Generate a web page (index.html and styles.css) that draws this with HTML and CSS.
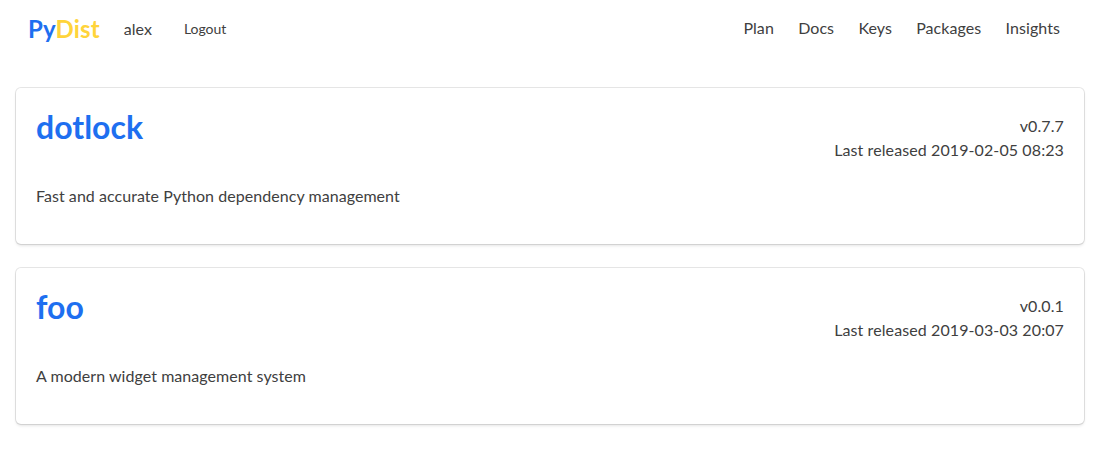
FILE: index.html
```html
<!DOCTYPE html>
<html lang="en">
<head>
  <meta charset="UTF-8">
  <title>PyDist</title>
  <link rel="stylesheet" href="styles.css">
</head>
<body>
  <nav class="navbar">
    <div class="navbar-left">
      <a class="brand" href="#"><span class="brand-py">Py</span><span class="brand-dist">Dist</span></a>
      <span class="nav-user">alex</span>
      <a class="nav-logout" href="#">Logout</a>
    </div>
    <div class="navbar-right">
      <a href="#">Plan</a>
      <a href="#">Docs</a>
      <a href="#">Keys</a>
      <a href="#">Packages</a>
      <a href="#">Insights</a>
    </div>
  </nav>

  <main class="package-list">
    <div class="card">
      <div class="card-top">
        <a class="package-name" href="#">dotlock</a>
        <div class="package-meta">
          <div>v0.7.7</div>
          <div>Last released 2019-02-05 08:23</div>
        </div>
      </div>
      <p class="package-desc">Fast and accurate Python dependency management</p>
    </div>
    <div class="card">
      <div class="card-top">
        <a class="package-name" href="#">foo</a>
        <div class="package-meta">
          <div>v0.0.1</div>
          <div>Last released 2019-03-03 20:07</div>
        </div>
      </div>
      <p class="package-desc">A modern widget management system</p>
    </div>
  </main>
</body>
</html>
```
FILE: styles.css
```css
body {
  margin: 0;
  font-family: Lato, sans-serif;
  font-size: 16px;
  color: #404040;
  background-color: #fff;
}

a {
  color: inherit;
  text-decoration: none;
}

.navbar {
  display: flex;
  justify-content: space-between;
  align-items: center;
  height: 56px;
  padding: 0 28px;
}

.navbar-left {
  display: flex;
  align-items: center;
}

.navbar-right {
  display: flex;
  gap: 24.25px;
  padding-right: 12px;
  padding-bottom: 2px;
  letter-spacing: 0.07px;
}

.brand {
  font-size: 24px;
  font-weight: 700;
  letter-spacing: 0.15px;
  margin-right: 24px;
}

.brand-py {
  color: #1e6ff0;
}

.brand-dist {
  color: #ffd43b;
}

.nav-logout {
  font-size: 14px;
  margin-left: 32px;
}

.package-list {
  display: flex;
  flex-direction: column;
  gap: 24px;
  padding: 32px 16px 30px;
}

.card {
  height: 156px;
  box-sizing: border-box;
  padding: 20px;
  border-radius: 5px;
  box-shadow: 0 2px 3px rgba(10, 10, 10, 0.1), 0 0 0 1px rgba(10, 10, 10, 0.1);
}

.card-top {
  display: flex;
  justify-content: space-between;
}

.package-name {
  font-size: 32px;
  font-weight: 700;
  line-height: 38px;
  color: #1e6ff0;
}

.package-meta {
  text-align: right;
  line-height: 24px;
  letter-spacing: 0.1px;
  padding-top: 6px;
}

.package-desc {
  margin: 22px 0 0;
  line-height: 24px;
  letter-spacing: 0.05px;
}
```
